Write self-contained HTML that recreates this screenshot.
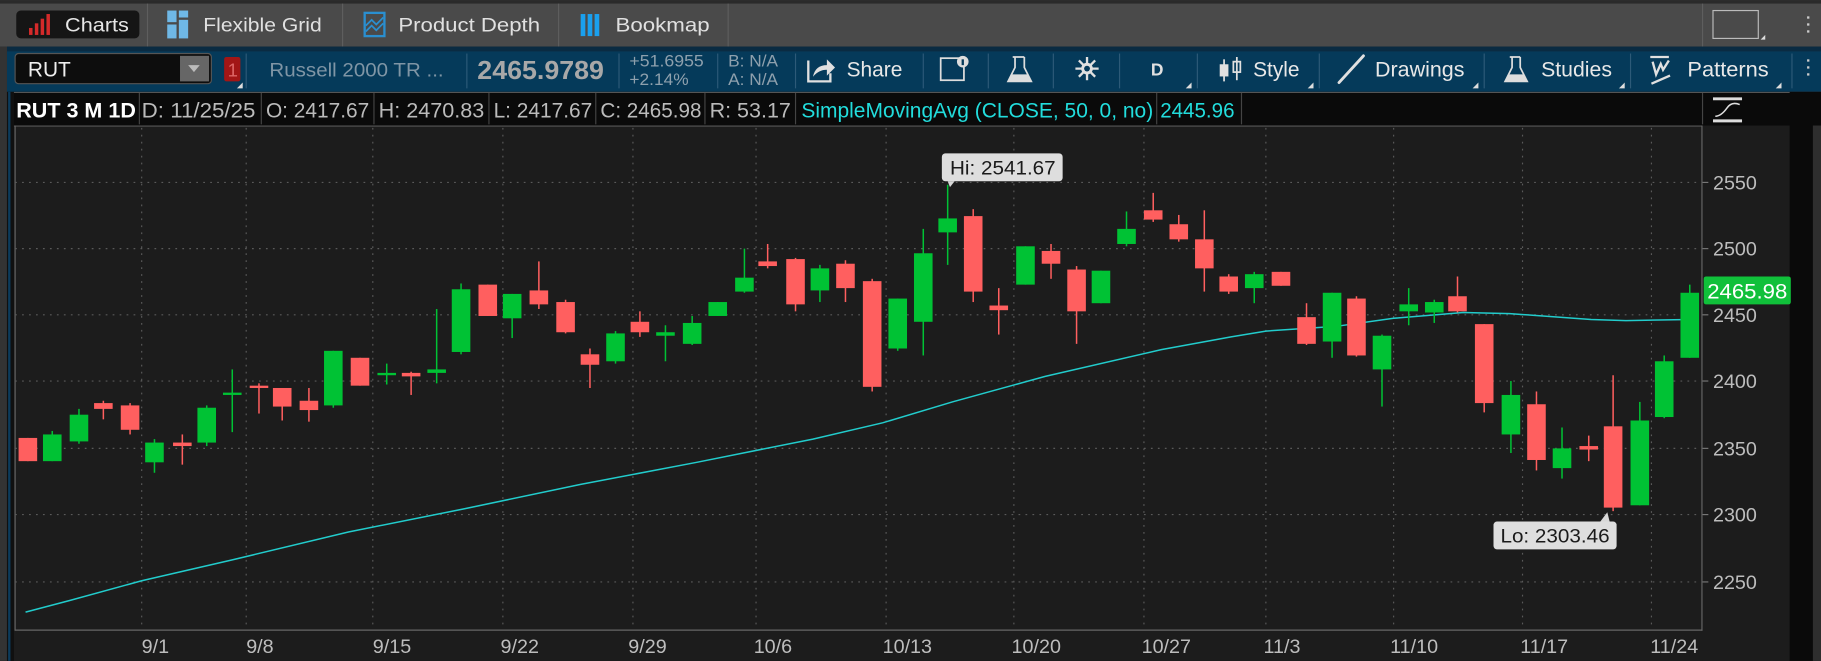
<!DOCTYPE html>
<html><head><meta charset="utf-8"><style>
html,body{margin:0;padding:0;background:#1c1c1c;overflow:hidden}
svg{display:block}
text{font-family:"Liberation Sans",sans-serif}
</style></head><body>
<svg width="1821" height="661" viewBox="0 0 1568 569" xmlns="http://www.w3.org/2000/svg">
<!-- top tab bar -->
<rect x="0" y="0" width="1568" height="40" fill="#4a4a4a"/>
<rect x="0" y="0" width="1568" height="3" fill="#2a2a2a"/>
<rect x="14" y="9" width="106" height="24" rx="4" fill="#151515"/>
<g fill="#d42a2a"><rect x="25" y="24" width="3" height="6"/><rect x="30" y="20" width="3" height="10"/><rect x="35" y="16" width="3" height="14"/><rect x="40" y="12" width="3" height="18"/></g>
<text x="56" y="27" font-size="17" fill="#e6e6e6" textLength="55" lengthAdjust="spacingAndGlyphs">Charts</text>
<g stroke="#5e5e5e"><line x1="127" y1="3" x2="127" y2="40"/><line x1="295" y1="3" x2="295" y2="40"/><line x1="481" y1="3" x2="481" y2="40"/><line x1="627" y1="3" x2="627" y2="40"/><line x1="1466" y1="3" x2="1466" y2="40"/></g>
<g fill="#6fb8e6"><rect x="144" y="9" width="8" height="10"/><rect x="154" y="9" width="8" height="6"/><rect x="144" y="21" width="8" height="12"/><rect x="154" y="17" width="8" height="16"/></g>
<text x="175" y="27" font-size="17" fill="#e0e0e0" textLength="102" lengthAdjust="spacingAndGlyphs">Flexible Grid</text>
<rect x="314" y="11" width="17" height="20" fill="none" stroke="#2a8fd0" stroke-width="2"/>
<path d="M315 22 L320 17 L324 21 L330 15 M315 27 L320 22 L324 26 L330 20" stroke="#2a8fd0" stroke-width="1.5" fill="none"/>
<text x="343" y="27" font-size="17" fill="#e0e0e0" textLength="122" lengthAdjust="spacingAndGlyphs">Product Depth</text>
<g fill="#1aa0ee"><rect x="500" y="12" width="4" height="19"/><rect x="506" y="12" width="4" height="19"/><rect x="512" y="12" width="4" height="19"/></g>
<text x="530" y="27" font-size="17" fill="#e0e0e0" textLength="81" lengthAdjust="spacingAndGlyphs">Bookmap</text>
<rect x="1475" y="9" width="39" height="24" fill="none" stroke="#bbb" stroke-width="1"/>
<path d="M1516 34 L1520 30 L1520 34Z" fill="#ddd"/>
<g fill="#ccc"><rect x="1556" y="14" width="2" height="2"/><rect x="1556" y="20" width="2" height="2"/><rect x="1556" y="26" width="2" height="2"/></g>

<!-- toolbar -->
<rect x="0" y="40" width="1568" height="4" fill="#0a2b42"/>
<rect x="6" y="44" width="1562" height="35" fill="#053a5a"/>
<rect x="0" y="40" width="6" height="529" fill="#333"/>
<rect x="13" y="46" width="169" height="26" rx="3" fill="#0d0d0d" stroke="#555"/>
<text x="24" y="66" font-size="18" fill="#eee">RUT</text>
<rect x="155" y="48" width="25" height="22" fill="#666"/>
<path d="M162 56 L172 56 L167 62Z" fill="#bbb"/>
<rect x="193" y="49" width="14" height="21" rx="2" fill="#a21616"/>
<text x="196" y="66" font-size="16" fill="#d66">1</text>
<path d="M204 76 L209 71 L209 76Z" fill="#ddd"/>
<g stroke="#2d5a78"><line x1="212" y1="46" x2="212" y2="76"/><line x1="402" y1="46" x2="402" y2="76"/><line x1="533" y1="46" x2="533" y2="76"/><line x1="618" y1="46" x2="618" y2="76"/><line x1="685" y1="46" x2="685" y2="76"/><line x1="795" y1="46" x2="795" y2="76"/><line x1="851" y1="46" x2="851" y2="76"/><line x1="907" y1="46" x2="907" y2="76"/><line x1="964" y1="46" x2="964" y2="76"/><line x1="1031" y1="46" x2="1031" y2="76"/><line x1="1136" y1="46" x2="1136" y2="76"/><line x1="1278" y1="46" x2="1278" y2="76"/><line x1="1404" y1="46" x2="1404" y2="76"/><line x1="1543" y1="46" x2="1543" y2="76"/></g>
<text x="232" y="66" font-size="17" fill="#7f95a5" textLength="150" lengthAdjust="spacingAndGlyphs">Russell 2000 TR ...</text>
<text x="411" y="68" font-size="22" font-weight="bold" fill="#a8a8a8" textLength="109" lengthAdjust="spacingAndGlyphs">2465.9789</text>
<text x="542" y="57" font-size="14" fill="#8ea0ad" textLength="64" lengthAdjust="spacingAndGlyphs">+51.6955</text>
<text x="542" y="73" font-size="14" fill="#8ea0ad" textLength="51" lengthAdjust="spacingAndGlyphs">+2.14%</text>
<text x="627" y="57" font-size="14" fill="#8ea0ad" textLength="43" lengthAdjust="spacingAndGlyphs">B: N/A</text>
<text x="627" y="73" font-size="14" fill="#8ea0ad" textLength="43" lengthAdjust="spacingAndGlyphs">A: N/A</text>
<path d="M696 52 L696 70 L715 70 L715 63" stroke="#e0e0e0" stroke-width="2" fill="none"/>
<path d="M700 66 Q702 56 712 56 L712 51 L719 58 L712 65 L712 60 Q705 60 700 66Z" fill="#e0e0e0"/>
<text x="729" y="66" font-size="18" fill="#e8e8e8" textLength="48" lengthAdjust="spacingAndGlyphs">Share</text>
<rect x="810" y="50" width="20" height="19" fill="none" stroke="#ddd" stroke-width="1.5"/>
<circle cx="829" cy="53" r="5" fill="#ddd"/><rect x="828" y="51" width="2" height="5" fill="#053a5a"/>
<path d="M872 49 L882 49 M874 49 L874 58 L868 70 L888 70 L882 58 L882 49" stroke="#ddd" stroke-width="1.5" fill="none"/>
<path d="M871 64 L885 64 L888 70 L868 70Z" fill="#ddd"/>
<circle cx="936" cy="59" r="5" fill="#e0e0e0"/>
<g stroke="#e0e0e0" stroke-width="2"><line x1="936" y1="49" x2="936" y2="69"/><line x1="926" y1="59" x2="946" y2="59"/><line x1="929" y1="52" x2="943" y2="66"/><line x1="943" y1="52" x2="929" y2="66"/></g>
<circle cx="936" cy="59" r="2.5" fill="#053a5a"/>
<text x="991" y="65" font-size="15" font-weight="bold" fill="#e0e0e0">D</text>
<path d="M1021 76 L1026 71 L1026 76Z" fill="#ddd"/>
<g stroke="#e0e0e0" stroke-width="1.5" fill="none"><line x1="1054" y1="51" x2="1054" y2="70"/><rect x="1051" y="56" width="6" height="9" fill="#e0e0e0"/><line x1="1065" y1="49" x2="1065" y2="69"/><rect x="1062" y="53" width="6" height="9"/></g>
<text x="1079" y="66" font-size="18" fill="#e8e8e8" textLength="40" lengthAdjust="spacingAndGlyphs">Style</text>
<path d="M1126 76 L1131 71 L1131 76Z" fill="#ddd"/>
<line x1="1153" y1="71" x2="1174" y2="48" stroke="#e0e0e0" stroke-width="2.5" stroke-linecap="round"/>
<text x="1184" y="66" font-size="18" fill="#e8e8e8" textLength="77" lengthAdjust="spacingAndGlyphs">Drawings</text>
<path d="M1268 76 L1273 71 L1273 76Z" fill="#ddd"/>
<path d="M1300 49 L1309 49 M1302 49 L1302 58 L1296 70 L1315 70 L1309 58 L1309 49" stroke="#ddd" stroke-width="1.5" fill="none"/>
<path d="M1299 64 L1312 64 L1315 70 L1296 70Z" fill="#ddd"/>
<text x="1327" y="66" font-size="18" fill="#e8e8e8" textLength="61" lengthAdjust="spacingAndGlyphs">Studies</text>
<path d="M1394 76 L1399 71 L1399 76Z" fill="#ddd"/>
<g stroke="#e0e0e0" stroke-width="2" fill="none"><line x1="1421" y1="49" x2="1437" y2="49"/><path d="M1423 53 L1426 64 L1430 55 L1432 60 L1437 52"/><line x1="1422" y1="72" x2="1438" y2="65"/></g>
<text x="1453" y="66" font-size="18" fill="#e8e8e8" textLength="70" lengthAdjust="spacingAndGlyphs">Patterns</text>
<path d="M1529 76 L1534 71 L1534 76Z" fill="#ddd"/>
<g fill="#ccc"><rect x="1556" y="51" width="2" height="2"/><rect x="1556" y="57" width="2" height="2"/><rect x="1556" y="63" width="2" height="2"/></g>

<!-- left strip -->
<rect x="6" y="79" width="6" height="490" fill="#101010"/>
<rect x="7" y="79" width="2" height="490" fill="#0b3b5c"/>

<!-- info row -->
<rect x="12" y="79" width="1556" height="29" fill="#0a0a0a"/>
<line x1="12" y1="79.5" x2="1568" y2="79.5" stroke="#555"/>
<g font-size="18">
<text x="14" y="101" font-weight="bold" fill="#fff" textLength="103" lengthAdjust="spacingAndGlyphs">RUT 3 M 1D</text>
<text x="122" y="101" fill="#bbb" textLength="98" lengthAdjust="spacingAndGlyphs">D: 11/25/25</text>
<text x="229" y="101" fill="#bbb" textLength="89" lengthAdjust="spacingAndGlyphs">O: 2417.67</text>
<text x="326" y="101" fill="#bbb" textLength="91" lengthAdjust="spacingAndGlyphs">H: 2470.83</text>
<text x="425" y="101" fill="#bbb" textLength="85" lengthAdjust="spacingAndGlyphs">L: 2417.67</text>
<text x="517" y="101" fill="#bbb" textLength="87" lengthAdjust="spacingAndGlyphs">C: 2465.98</text>
<text x="611" y="101" fill="#bbb" textLength="70" lengthAdjust="spacingAndGlyphs">R: 53.17</text>
<text x="690" y="101" fill="#22dddd" textLength="303" lengthAdjust="spacingAndGlyphs">SimpleMovingAvg (CLOSE, 50, 0, no)</text>
<text x="999" y="101" fill="#22dddd" textLength="64" lengthAdjust="spacingAndGlyphs">2445.96</text>
</g>
<g stroke="#444"><line x1="120" y1="80" x2="120" y2="107"/><line x1="225" y1="80" x2="225" y2="107"/><line x1="322" y1="80" x2="322" y2="107"/><line x1="421" y1="80" x2="421" y2="107"/><line x1="513" y1="80" x2="513" y2="107"/><line x1="607" y1="80" x2="607" y2="107"/><line x1="685" y1="80" x2="685" y2="107"/><line x1="996" y1="80" x2="996" y2="107"/><line x1="1069" y1="80" x2="1069" y2="107"/><line x1="1466" y1="80" x2="1466" y2="107"/></g>
<g stroke="#ddd" stroke-width="2.5" fill="none"><line x1="1475" y1="85" x2="1500" y2="85"/><line x1="1475" y1="104" x2="1500" y2="104"/><path d="M1477 100 Q1482 100 1487 93 Q1491 87 1498 90" stroke-width="1.3"/></g>

<!-- chart area -->
<rect x="12" y="108" width="1454" height="461" fill="#1c1c1c"/>
<rect x="1466" y="108" width="75" height="461" fill="#1c1c1c"/>
<rect x="1541" y="79" width="27" height="490" fill="#0a0a0a"/>
<rect x="1561" y="108" width="7" height="461" fill="#2e2e2e"/>
<line x1="12" y1="108.5" x2="1466" y2="108.5" stroke="#555"/>
<line x1="13" y1="108" x2="13" y2="543" stroke="#666"/>
<line x1="13" y1="542.5" x2="1466" y2="542.5" stroke="#666"/>
<line x1="1465.5" y1="108" x2="1465.5" y2="543" stroke="#666"/>
<g stroke="#5a5a5a" stroke-dasharray="1.5 4.5">
<line x1="13" y1="157" x2="1465" y2="157"/><line x1="13" y1="214" x2="1465" y2="214"/><line x1="13" y1="271" x2="1465" y2="271"/><line x1="13" y1="328" x2="1465" y2="328"/><line x1="13" y1="386" x2="1465" y2="386"/><line x1="13" y1="443" x2="1465" y2="443"/><line x1="13" y1="501" x2="1465" y2="501"/>
</g>
<g stroke="#5a5a5a" stroke-dasharray="1.5 4.5">
<line x1="122" y1="110" x2="122" y2="542"/><line x1="212" y1="110" x2="212" y2="542"/><line x1="321" y1="110" x2="321" y2="542"/><line x1="433" y1="110" x2="433" y2="542"/><line x1="545" y1="110" x2="545" y2="542"/><line x1="651" y1="110" x2="651" y2="542"/><line x1="763" y1="110" x2="763" y2="542"/><line x1="873" y1="110" x2="873" y2="542"/><line x1="985" y1="110" x2="985" y2="542"/><line x1="1090" y1="110" x2="1090" y2="542"/><line x1="1200" y1="110" x2="1200" y2="542"/><line x1="1311" y1="110" x2="1311" y2="542"/><line x1="1422" y1="110" x2="1422" y2="542"/>
</g>
<g stroke="#777"><line x1="1466" y1="157" x2="1471" y2="157"/><line x1="1466" y1="214" x2="1471" y2="214"/><line x1="1466" y1="271" x2="1471" y2="271"/><line x1="1466" y1="328" x2="1471" y2="328"/><line x1="1466" y1="386" x2="1471" y2="386"/><line x1="1466" y1="443" x2="1471" y2="443"/><line x1="1466" y1="501" x2="1471" y2="501"/></g>
<g font-size="17" fill="#bdbdbd">
<text x="1475" y="163">2550</text><text x="1475" y="220">2500</text><text x="1475" y="277">2450</text><text x="1475" y="334">2400</text><text x="1475" y="392">2350</text><text x="1475" y="449">2300</text><text x="1475" y="507">2250</text>
</g>
<g font-size="17" fill="#bdbdbd">
<text x="122" y="562">9/1</text><text x="212" y="562">9/8</text><text x="321" y="562">9/15</text><text x="431" y="562">9/22</text><text x="541" y="562">9/29</text><text x="649" y="562">10/6</text><text x="760" y="562">10/13</text><text x="871" y="562">10/20</text><text x="983" y="562">10/27</text><text x="1088" y="562">11/3</text><text x="1197" y="562">11/10</text><text x="1309" y="562">11/17</text><text x="1421" y="562">11/24</text>
</g>

<polyline fill="none" stroke="#22cccc" stroke-width="1.3" points="22,527 60,517 122,500 200,482 300,458 400,438 500,417 600,398 700,378 760,364 820,346 900,324 1000,301 1060,290 1090,285 1150,281 1200,274 1260,269 1300,270 1370,275 1400,276 1455,275"/>

<g fill="#ff5f5f" stroke="#ff5f5f" stroke-width="1.3">
<line x1="24" y1="377" x2="24" y2="397"/><rect x="16" y="377" width="16" height="20" stroke="none"/>
<line x1="89" y1="345" x2="89" y2="361"/><rect x="81" y="347" width="16" height="5" stroke="none"/>
<line x1="112" y1="347" x2="112" y2="374"/><rect x="104" y="349" width="16" height="21" stroke="none"/>
<line x1="157" y1="374" x2="157" y2="400"/><rect x="149" y="381" width="16" height="3" stroke="none"/>
<line x1="223" y1="330" x2="223" y2="356"/><rect x="215" y="332" width="16" height="2" stroke="none"/>
<line x1="243" y1="334" x2="243" y2="362"/><rect x="235" y="334" width="16" height="16" stroke="none"/>
<line x1="266" y1="334" x2="266" y2="363"/><rect x="258" y="345" width="16" height="8" stroke="none"/>
<line x1="310" y1="308" x2="310" y2="332"/><rect x="302" y="308" width="16" height="24" stroke="none"/>
<line x1="354" y1="320" x2="354" y2="340"/><rect x="346" y="321" width="16" height="3" stroke="none"/>
<line x1="420" y1="245" x2="420" y2="272"/><rect x="412" y="245" width="16" height="27" stroke="none"/>
<line x1="464" y1="225" x2="464" y2="266"/><rect x="456" y="250" width="16" height="12" stroke="none"/>
<line x1="487" y1="258" x2="487" y2="287"/><rect x="479" y="260" width="16" height="26" stroke="none"/>
<line x1="508" y1="300" x2="508" y2="334"/><rect x="500" y="305" width="16" height="9" stroke="none"/>
<line x1="551" y1="268" x2="551" y2="290"/><rect x="543" y="277" width="16" height="9" stroke="none"/>
<line x1="661" y1="210" x2="661" y2="231"/><rect x="653" y="225" width="16" height="4" stroke="none"/>
<line x1="685" y1="222" x2="685" y2="268"/><rect x="677" y="223" width="16" height="39" stroke="none"/>
<line x1="728" y1="224" x2="728" y2="260"/><rect x="720" y="227" width="16" height="21" stroke="none"/>
<line x1="751" y1="240" x2="751" y2="337"/><rect x="743" y="242" width="16" height="91" stroke="none"/>
<line x1="838" y1="180" x2="838" y2="260"/><rect x="830" y="186" width="16" height="65" stroke="none"/>
<line x1="860" y1="248" x2="860" y2="288"/><rect x="852" y="263" width="16" height="4" stroke="none"/>
<line x1="905" y1="210" x2="905" y2="240"/><rect x="897" y="216" width="16" height="11" stroke="none"/>
<line x1="927" y1="229" x2="927" y2="296"/><rect x="919" y="232" width="16" height="36" stroke="none"/>
<line x1="993" y1="166" x2="993" y2="191"/><rect x="985" y="181" width="16" height="8" stroke="none"/>
<line x1="1015" y1="185" x2="1015" y2="208"/><rect x="1007" y="193" width="16" height="13" stroke="none"/>
<line x1="1037" y1="181" x2="1037" y2="251"/><rect x="1029" y="206" width="16" height="25" stroke="none"/>
<line x1="1058" y1="236" x2="1058" y2="253"/><rect x="1050" y="238" width="16" height="13" stroke="none"/>
<line x1="1103" y1="234" x2="1103" y2="246"/><rect x="1095" y="234" width="16" height="12" stroke="none"/>
<line x1="1125" y1="261" x2="1125" y2="297"/><rect x="1117" y="273" width="16" height="23" stroke="none"/>
<line x1="1168" y1="255" x2="1168" y2="307"/><rect x="1160" y="257" width="16" height="49" stroke="none"/>
<line x1="1255" y1="238" x2="1255" y2="269"/><rect x="1247" y="255" width="16" height="13" stroke="none"/>
<line x1="1278" y1="279" x2="1278" y2="355"/><rect x="1270" y="279" width="16" height="68" stroke="none"/>
<line x1="1323" y1="337" x2="1323" y2="405"/><rect x="1315" y="348" width="16" height="48" stroke="none"/>
<line x1="1368" y1="375" x2="1368" y2="397"/><rect x="1360" y="384" width="16" height="3" stroke="none"/>
<line x1="1389" y1="323" x2="1389" y2="440"/><rect x="1381" y="367" width="16" height="70" stroke="none"/>
</g>
<g fill="#00c234" stroke="#00c234" stroke-width="1.3">
<line x1="45" y1="371" x2="45" y2="397"/><rect x="37" y="374" width="16" height="23" stroke="none"/>
<line x1="68" y1="352" x2="68" y2="382"/><rect x="60" y="357" width="16" height="23" stroke="none"/>
<line x1="133" y1="378" x2="133" y2="407"/><rect x="125" y="381" width="16" height="17" stroke="none"/>
<line x1="178" y1="349" x2="178" y2="384"/><rect x="170" y="351" width="16" height="30" stroke="none"/>
<line x1="200" y1="318" x2="200" y2="372"/><rect x="192" y="338" width="16" height="2" stroke="none"/>
<line x1="287" y1="302" x2="287" y2="351"/><rect x="279" y="302" width="16" height="47" stroke="none"/>
<line x1="333" y1="313" x2="333" y2="331"/><rect x="325" y="321" width="16" height="2" stroke="none"/>
<line x1="376" y1="266" x2="376" y2="330"/><rect x="368" y="318" width="16" height="3" stroke="none"/>
<line x1="397" y1="244" x2="397" y2="305"/><rect x="389" y="249" width="16" height="54" stroke="none"/>
<line x1="441" y1="253" x2="441" y2="291"/><rect x="433" y="253" width="16" height="21" stroke="none"/>
<line x1="530" y1="285" x2="530" y2="313"/><rect x="522" y="287" width="16" height="24" stroke="none"/>
<line x1="573" y1="280" x2="573" y2="311"/><rect x="565" y="286" width="16" height="3" stroke="none"/>
<line x1="596" y1="272" x2="596" y2="297"/><rect x="588" y="278" width="16" height="18" stroke="none"/>
<line x1="618" y1="260" x2="618" y2="272"/><rect x="610" y="260" width="16" height="12" stroke="none"/>
<line x1="641" y1="214" x2="641" y2="252"/><rect x="633" y="239" width="16" height="12" stroke="none"/>
<line x1="706" y1="228" x2="706" y2="260"/><rect x="698" y="231" width="16" height="19" stroke="none"/>
<line x1="773" y1="257" x2="773" y2="302"/><rect x="765" y="257" width="16" height="43" stroke="none"/>
<line x1="795" y1="197" x2="795" y2="306"/><rect x="787" y="218" width="16" height="59" stroke="none"/>
<line x1="816" y1="159" x2="816" y2="228"/><rect x="808" y="188" width="16" height="12" stroke="none"/>
<line x1="883" y1="212" x2="883" y2="245"/><rect x="875" y="212" width="16" height="33" stroke="none"/>
<line x1="948" y1="233" x2="948" y2="261"/><rect x="940" y="233" width="16" height="28" stroke="none"/>
<line x1="970" y1="182" x2="970" y2="212"/><rect x="962" y="197" width="16" height="13" stroke="none"/>
<line x1="1080" y1="234" x2="1080" y2="261"/><rect x="1072" y="236" width="16" height="12" stroke="none"/>
<line x1="1147" y1="252" x2="1147" y2="308"/><rect x="1139" y="252" width="16" height="42" stroke="none"/>
<line x1="1190" y1="288" x2="1190" y2="350"/><rect x="1182" y="289" width="16" height="29" stroke="none"/>
<line x1="1213" y1="248" x2="1213" y2="280"/><rect x="1205" y="262" width="16" height="6" stroke="none"/>
<line x1="1235" y1="258" x2="1235" y2="278"/><rect x="1227" y="260" width="16" height="9" stroke="none"/>
<line x1="1301" y1="328" x2="1301" y2="390"/><rect x="1293" y="340" width="16" height="34" stroke="none"/>
<line x1="1345" y1="368" x2="1345" y2="412"/><rect x="1337" y="386" width="16" height="17" stroke="none"/>
<line x1="1412" y1="346" x2="1412" y2="435"/><rect x="1404" y="362" width="16" height="73" stroke="none"/>
<line x1="1433" y1="306" x2="1433" y2="360"/><rect x="1425" y="311" width="16" height="48" stroke="none"/>
<line x1="1455" y1="245" x2="1455" y2="308"/><rect x="1447" y="252" width="16" height="56" stroke="none"/>
</g>

<path d="M816 156 L818 161 L822 156Z" fill="#d8d8d8"/>
<rect x="811" y="132" width="104" height="24" rx="3" fill="#dedede"/>
<text x="818" y="150" font-size="17" fill="#1a1a1a" textLength="91" lengthAdjust="spacingAndGlyphs">Hi: 2541.67</text>
<path d="M1378 449 L1384 441 L1386 449Z" fill="#d8d8d8"/>
<rect x="1286" y="449" width="106" height="24" rx="3" fill="#dedede"/>
<text x="1292" y="467" font-size="17" fill="#1a1a1a" textLength="94" lengthAdjust="spacingAndGlyphs">Lo: 2303.46</text>

<rect x="1467" y="238" width="75" height="24" rx="2" fill="#10c03a"/>
<text x="1470" y="257" font-size="18" fill="#fff" textLength="69" lengthAdjust="spacingAndGlyphs">2465.98</text>
</svg>
</body></html>
